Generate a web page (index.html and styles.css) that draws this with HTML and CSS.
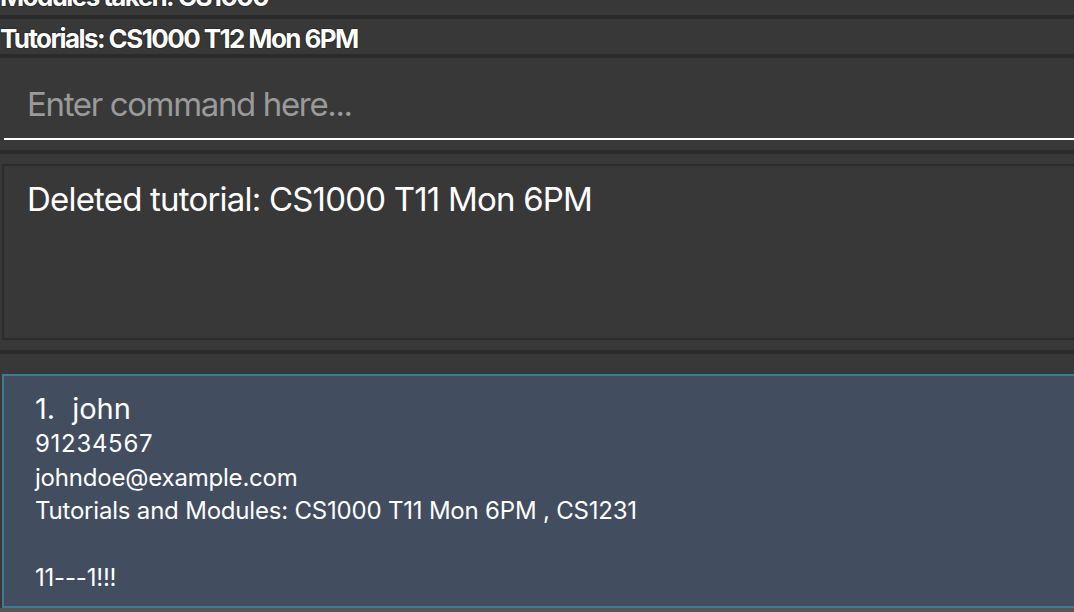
FILE: index.html
```html
<!DOCTYPE html>
<html>
<head>
<meta charset="utf-8">
<link rel="stylesheet" href="styles.css">
</head>
<body>
<div class="app">
  <div class="info-bar info-top"><span class="info-text">Modules taken: CS1000</span></div>
  <div class="divider"></div>
  <div class="info-bar info-tut"><span class="info-text">Tutorials: CS1000 T12 Mon 6PM</span></div>
  <div class="divider"></div>
  <div class="command-area">
    <div class="command-field"><span class="placeholder">Enter command here...</span></div>
  </div>
  <div class="divider"></div>
  <div class="result-area">
    <div class="result-box"><div class="result-text">Deleted tutorial: CS1000 T11 Mon 6PM</div></div>
  </div>
  <div class="divider"></div>
  <div class="list-area">
    <div class="card">
      <div class="card-name"><span class="card-index">1.</span><span>john</span></div>
      <div class="card-line card-phone">91234567</div>
      <div class="card-line">johndoe@example.com</div>
      <div class="card-line">Tutorials and Modules: CS1000 T11 Mon 6PM , CS1231</div>
      <div class="card-line card-blank"></div>
      <div class="card-line">11---1!!!</div>
    </div>
    <div class="next-cell"></div>
  </div>
</div>
</body>
</html>
```

FILE: styles.css
```css
html, body {
  margin: 0;
  padding: 0;
  background: #383838;
  overflow: hidden;
}
.app {
  width: 1074px;
  height: 612px;
  display: flex;
  flex-direction: column;
  font-family: Inter, "Liberation Sans", sans-serif;
  color: #ffffff;
  overflow: hidden;
}
.divider {
  height: 4px;
  background: #2a2a2a;
  flex: none;
}
.info-bar {
  background: #383838;
  display: flex;
  align-items: flex-end;
  overflow: hidden;
  padding-left: 0;
  flex: none;
}
.info-top {
  height: 15px;
}
.info-tut {
  height: 35px;
}
.info-text {
  font-weight: 700;
  font-size: 26px;
  letter-spacing: -1.6px;
  line-height: 28px;
  color: #ffffff;
  text-shadow: 0 0 1px #1a1a1a, 0 0 1px #1a1a1a, 0 0 1px #1a1a1a;
  white-space: nowrap;
}
.info-top .info-text {
  margin-bottom: 4px;
}
.info-tut .info-text {
  margin-bottom: 1px;
}
.command-area {
  height: 92px;
  flex: none;
  display: flex;
  flex-direction: column;
  justify-content: flex-end;
  padding-bottom: 10px;
  box-sizing: border-box;
}
.command-field {
  margin-left: 4px;
  width: 1100px;
  height: 70px;
  border-bottom: 2px solid #ffffff;
  box-sizing: border-box;
  display: flex;
  align-items: center;
  padding-left: 23px;
}
.placeholder {
  font-size: 33px;
  color: #9a9a9a;
  letter-spacing: -1.35px;
  white-space: nowrap;
}
.result-area {
  height: 196px;
  flex: none;
  padding: 10px 0 10px 2px;
  box-sizing: border-box;
}
.result-box {
  width: 1100px;
  height: 176px;
  border: 2px solid #2c2c2c;
  box-sizing: border-box;
  padding: 13px 0 0 23px;
}
.result-text {
  font-size: 33px;
  letter-spacing: -0.8px;
  white-space: nowrap;
  line-height: 40px;
}
.list-area {
  flex: 1;
  padding-top: 20px;
  box-sizing: border-box;
  display: flex;
  flex-direction: column;
}
.card {
  margin-left: 2px;
  width: 1100px;
  height: 234px;
  flex: none;
  background: #424d5f;
  border: 2px solid #3e7b91;
  box-sizing: border-box;
  padding: 14px 0 0 31px;
}
.card-name {
  font-size: 29px;
  line-height: 37px;
  display: flex;
  gap: 17px;
  white-space: nowrap;
}
.card-line {
  font-size: 24px;
  line-height: 33.5px;
  white-space: nowrap;
  letter-spacing: -0.2px;
  height: 33.5px;
}
.card-phone {
  letter-spacing: 0.7px;
}
.next-cell {
  flex: 1;
  background: #515658;
}
```
